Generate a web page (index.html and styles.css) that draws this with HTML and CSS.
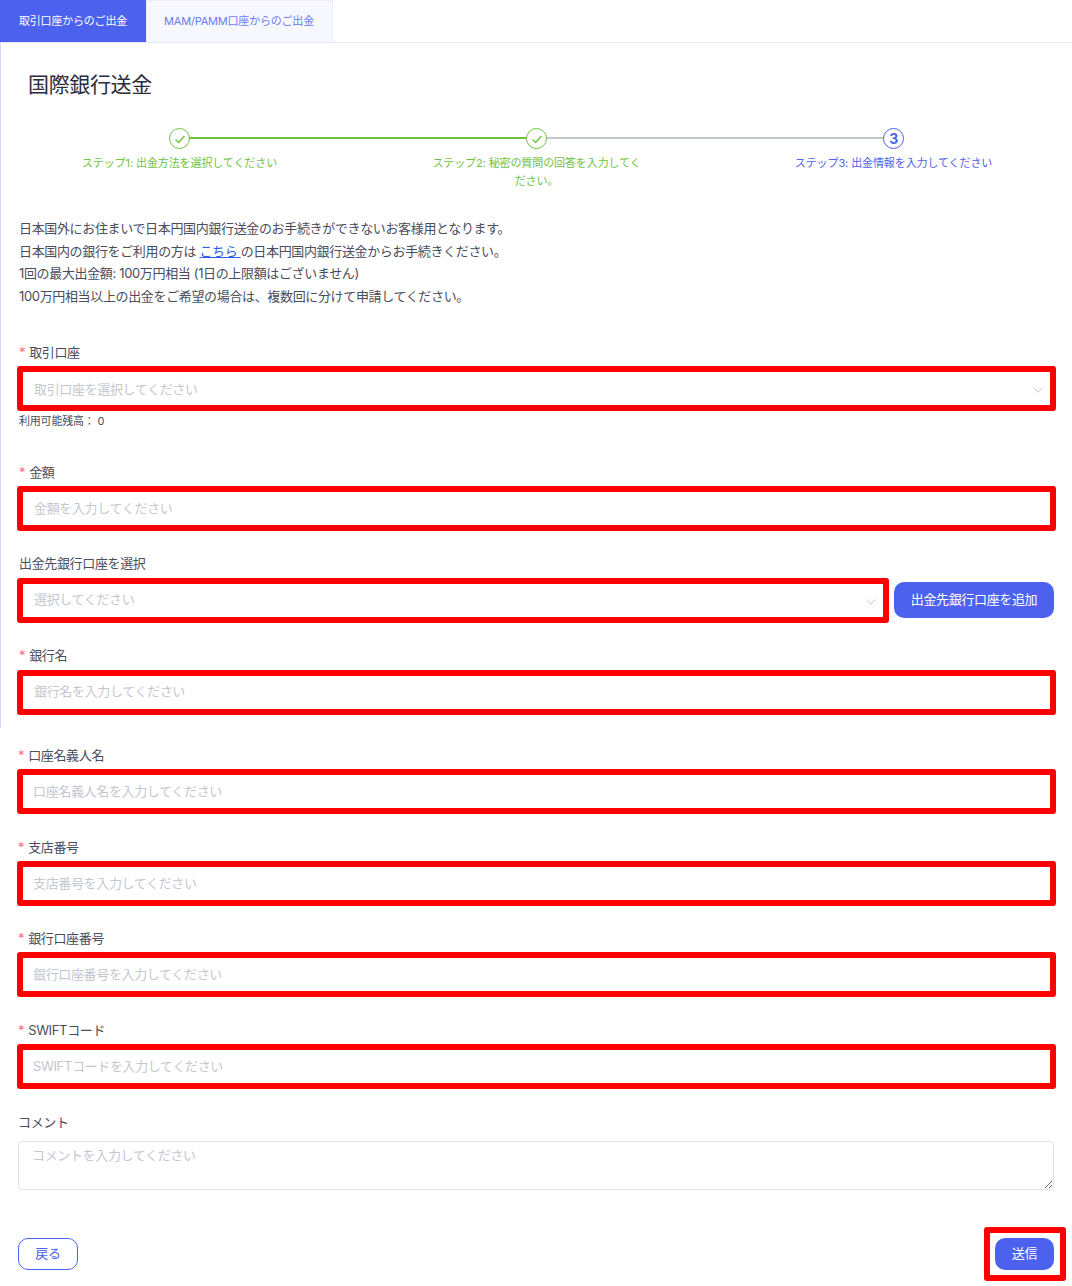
FILE: index.html
```html
<!DOCTYPE html>
<html lang="ja">
  <head>
    <meta charset="UTF-8" />
    <meta name="viewport" content="width=device-width, initial-scale=1.0" />
    <title>国際銀行送金</title>
    <link rel="stylesheet" href="styles.css">
  </head>

  <body>
    <div class="tabs">
      <a class="tab tab-active">取引口座からのご出金</a>
      <a class="tab">MAM/PAMM口座からのご出金</a>
    </div>

    <section class="panel">
      <h1 class="title">国際銀行送金</h1>

      <div class="steps">
        <div class="step step-done">
          <span class="step-icon">
            <svg viewBox="0 0 12 12" width="12" height="12"><path d="M1.5 6.5 4.6 9.4 10.5 3" /></svg>
          </span>
          <p class="step-text">ステップ1: 出金方法を選択してください</p>
        </div>
        <div class="step step-done step-line-before">
          <span class="step-icon">
            <svg viewBox="0 0 12 12" width="12" height="12"><path d="M1.5 6.5 4.6 9.4 10.5 3" /></svg>
          </span>
          <p class="step-text">ステップ2: 秘密の質問の回答を入力してください。</p>
        </div>
        <div class="step step-current">
          <span class="step-icon">3</span>
          <p class="step-text">ステップ3: 出金情報を入力してください</p>
        </div>
      </div>

      <div class="info">
        <p>日本国外にお住まいで日本円国内銀行送金のお手続きができないお客様用となります。</p>
        <p>日本国内の銀行をご利用の方は <a href="#">こちら </a>の日本円国内銀行送金からお手続きください。</p>
        <p>1回の最大出金額: 100万円相当 (1日の上限額はございません)</p>
        <p>100万円相当以上の出金をご希望の場合は、複数回に分けて申請してください。</p>
      </div>

      <div class="field field-first">
        <label class="label label-required">取引口座</label>
        <div class="box">
          <input class="input" placeholder="取引口座を選択してください" />
          <svg class="chevron" viewBox="0 0 10 6" width="10" height="6"><path d="M.5.5 5 5.2 9.5.5" /></svg>
        </div>
        <p class="help">利用可能残高： 0</p>
      </div>

      <div class="field field-amount">
        <label class="label label-required">金額</label>
        <div class="box">
          <input class="input" placeholder="金額を入力してください" />
        </div>
      </div>

      <div class="field field-high">
        <label class="label label-wide">出金先銀行口座を選択</label>
        <div class="box-row">
          <div class="box box-grow">
            <input class="input" placeholder="選択してください" />
            <svg class="chevron" viewBox="0 0 10 6" width="10" height="6"><path d="M.5.5 5 5.2 9.5.5" /></svg>
          </div>
          <button class="btn btn-add">出金先銀行口座を追加</button>
        </div>
      </div>

      <div class="field field-high">
        <label class="label label-required label-wide">銀行名</label>
        <div class="box">
          <input class="input" placeholder="銀行名を入力してください" />
        </div>
      </div>
    </section>

    <section class="lower">
      <div class="field">
        <label class="label label-required">口座名義人名</label>
        <div class="box">
          <input class="input" placeholder="口座名義人名を入力してください" />
        </div>
      </div>

      <div class="field">
        <label class="label label-required">支店番号</label>
        <div class="box">
          <input class="input" placeholder="支店番号を入力してください" />
        </div>
      </div>

      <div class="field field-tight">
        <label class="label label-required">銀行口座番号</label>
        <div class="box">
          <input class="input" placeholder="銀行口座番号を入力してください" />
        </div>
      </div>

      <div class="field">
        <label class="label label-required">SWIFTコード</label>
        <div class="box">
          <input class="input" placeholder="SWIFTコードを入力してください" />
        </div>
      </div>

      <div class="field">
        <label class="label label-comment">コメント</label>
        <textarea class="comment" placeholder="コメントを入力してください"></textarea>
      </div>

      <div class="actions">
        <button class="btn btn-back">戻る</button>
        <div class="submit-mark">
          <button class="btn btn-submit">送信</button>
        </div>
      </div>
    </section>
  </body>
</html>
```

FILE: styles.css
```css
* {
  box-sizing: border-box;
}

body {
  margin: 0;
  font-family: Inter, "Noto Sans CJK JP", sans-serif;
  font-size: 13px;
  letter-spacing: -0.35px;
  color: #4a4d5c;
  background: #fff;
}

p {
  margin: 0;
}

.tabs {
  display: flex;
  height: 43px;
  border-bottom: 1px solid #e3e6ff;
}

.tab {
  display: flex;
  align-items: center;
  justify-content: center;
  width: 187px;
  padding: 0 1px 4px 0;
  font-size: 11px;
  letter-spacing: -0.2px;
  color: #6c7cf0;
  background: #f7f8ff;
  border: 1px solid #e9ecff;
  border-bottom: 0;
}

.tab-active {
  width: 146px;
  padding: 0 0 3px;
  color: #fff;
  background: #4c62ee;
  border: 0;
}

.panel {
  height: 685px;
  padding: 0 16px 0 16px;
  border-left: 1px solid #d5d9ff;
}

.title {
  margin: 0;
  padding: 27px 0 0 11px;
  font-size: 21px;
  font-weight: 400;
  line-height: 30px;
  color: #2b2d3a;
}

.steps {
  display: grid;
  grid-template-columns: repeat(3, 357px);
  margin: 28px 0 0 -17px;
  padding-left: 1px;
}

.step {
  position: relative;
  display: flex;
  flex-direction: column;
  align-items: center;
}

.step-icon {
  z-index: 1;
  display: flex;
  align-items: center;
  justify-content: center;
  width: 21px;
  height: 21px;
  font-size: 14px;
  font-weight: 700;
  background: #fff;
  border: 1px solid;
  border-radius: 50%;
}

.step-icon svg {
  fill: none;
  stroke: #6fc23f;
  stroke-width: 1.4;
}

.step-done .step-icon {
  color: #6fc23f;
}

.step-current .step-icon {
  color: #4c62ee;
}

.step-text {
  width: 214px;
  margin-top: 5px;
  font-size: 11px;
  letter-spacing: -0.1px;
  line-height: 18px;
  text-align: center;
}

.step-done .step-text {
  color: #6fc23f;
}

.step-current .step-text {
  color: #4c62ee;
}

/* connector from this step to the next one */
.step-done::after,
.step-line-before::after {
  content: "";
  position: absolute;
  top: 9px;
  left: 50%;
  width: 100%;
  height: 2px;
  background: #6fc23f;
}

.step-line-before::after {
  background: #c3c6d1;
}

.info {
  margin: 27px 0 0 2px;
  line-height: 22.6px;
}

.info a {
  color: #2f5fe0;
  text-decoration: underline;
}

.field {
  margin: 22px 0 0 0;
}

.field-first {
  margin-top: 35px;
}

.field-amount {
  margin-top: 33px;
}

.label {
  display: block;
  height: 20px;
  margin: 0 0 4px 2px;
  line-height: 20px;
}

.label-wide {
  margin-bottom: 5px;
}

.label-required::before {
  content: "*";
  margin-right: 4px;
  color: #ff6b81;
}

.box {
  position: relative;
  display: flex;
  align-items: center;
  height: 45px;
  width: 1039px;
  background: #fff;
  border: 6px solid #f00;
  border-radius: 3px;
}

.box-row {
  display: flex;
  align-items: center;
  gap: 5px;
}

.box-grow {
  width: 872px;
}

.input {
  flex: 1;
  min-width: 0;
  height: 100%;
  padding: 0 11px 2px;
  font: inherit;
  letter-spacing: inherit;
  color: inherit;
  border: 0;
  outline: 0;
  background: transparent;
}

.field-first .input {
  padding-bottom: 0;
}

.field-high .input {
  padding-bottom: 4px;
}

.input::placeholder,
.comment::placeholder {
  color: #c4c7d0;
  opacity: 1;
}

.chevron {
  position: absolute;
  right: 7px;
  top: 15px;
  fill: none;
  stroke: #c4c7d0;
}

.help {
  margin: 2px 0 0 2px;
  font-size: 11px;
  letter-spacing: -0.2px;
  line-height: 16px;
}

.btn {
  padding: 0 0 4px;
  font: inherit;
  letter-spacing: inherit;
  border: 0;
  border-radius: 10px;
}

.btn-add {
  width: 160px;
  height: 36px;
  margin-bottom: 1px;
  color: #fff;
  background: #4c62ee;
}

.lower {
  padding: 17px 16px 0 17px;
}

.lower .field {
  margin-top: 23px;
}

.lower .field:first-child {
  margin-top: 0;
}

.lower .field-tight {
  margin-top: 22px;
}

.lower .label {
  margin-left: 1px;
}

.lower .input {
  padding: 0 10px 2px;
}

.lower .label-comment {
  margin-bottom: 9px;
}

.comment {
  display: block;
  width: 1036px;
  height: 49px;
  margin-left: 1px;
  padding: 3px 13px;
  font: inherit;
  letter-spacing: inherit;
  color: inherit;
  border: 1px solid #e1e3ea;
  border-radius: 4px;
  outline: 0;
}

.actions {
  display: flex;
  align-items: center;
  justify-content: space-between;
  margin: 37px 0 0 1px;
}

.btn-back {
  width: 60px;
  height: 32px;
  color: #4c62ee;
  background: #fff;
  border: 1px solid #4c62ee;
}

.submit-mark {
  display: flex;
  align-items: center;
  justify-content: flex-end;
  width: 82px;
  height: 54px;
  margin-right: -10px;
  padding-right: 6px;
  border: 6px solid #f00;
  border-radius: 3px;
}

.btn-submit {
  width: 59px;
  height: 32px;
  color: #fff;
  background: #4c62ee;
}
```
